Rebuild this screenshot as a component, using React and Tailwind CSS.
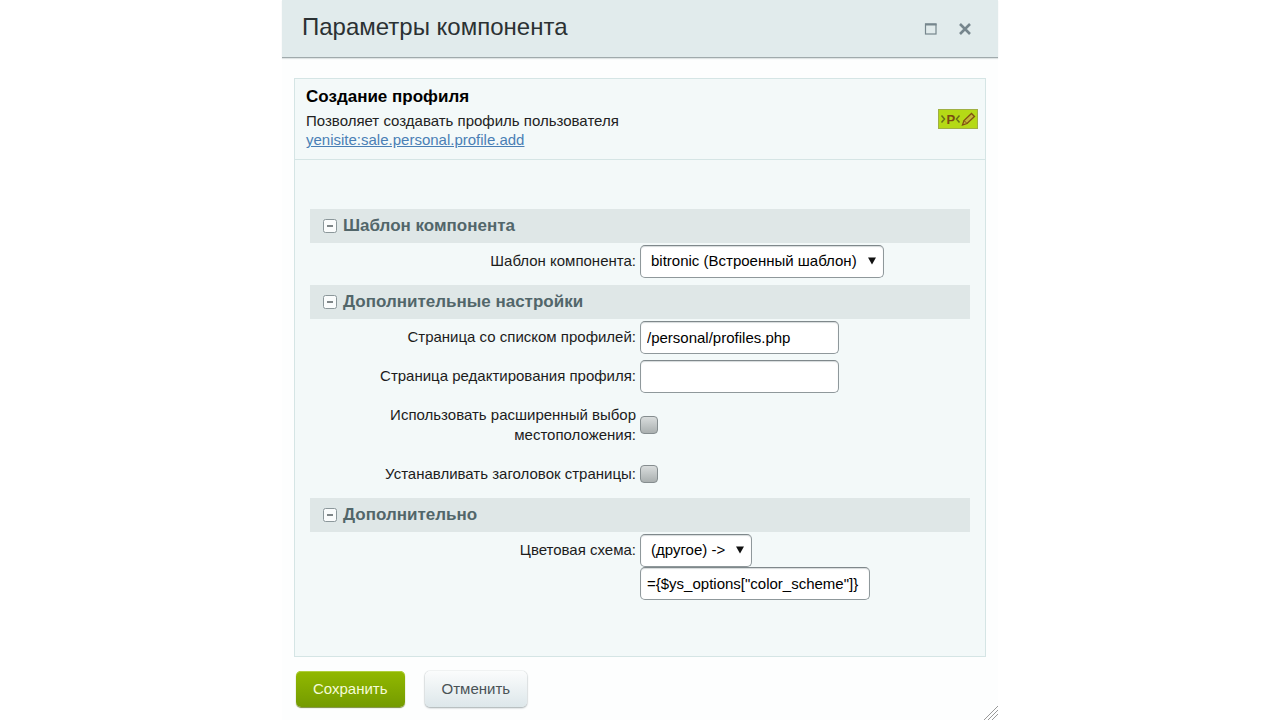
import { useState } from 'react';

const fieldStyle =
  'h-[33px] rounded-[5px] border border-[#8f989b] border-t-[#7f888b] bg-white text-[15px] text-black shadow-[inset_0_1px_1px_#d5dadb] outline-none';

function SelectField({ id, className, children }) {
  return (
    <div className={`relative ${className}`}>
      <select id={id} className={`${fieldStyle} w-full appearance-none pl-2.5 pr-6`}>
        {children}
      </select>
      <svg viewBox="0 0 8 8" className="pointer-events-none absolute right-2 top-3 h-2 w-2">
        <path d="M0 0.5h8L4 7.5z" fill="#111" />
      </svg>
    </div>
  );
}

function CheckField({ id }) {
  return (
    <input
      id={id}
      type="checkbox"
      className="block h-[18px] w-[18px] appearance-none rounded-[4px] border border-[#858d8f] bg-linear-to-b from-[#d9dddd] to-[#aab0b0] checked:to-[#7d8787]"
    />
  );
}

function Row({ id, label, className = 'pt-2 pb-0.5', children }) {
  return (
    <div className={`grid grid-cols-2 ${className}`}>
      <label htmlFor={id} className="pl-12 pr-1 text-right text-[15px] leading-5 text-[#1c1c1c]">
        {label}
      </label>
      {children}
    </div>
  );
}

function Section({ title, children }) {
  const [open, setOpen] = useState(true);

  return (
    <section>
      <h2 className="bg-[#dfe7e7]">
        <button
          type="button"
          aria-expanded={open}
          onClick={() => setOpen(!open)}
          className="flex h-[34px] w-full items-center gap-1.5 pl-[13px] text-left text-[17px] font-bold text-[#52666a]"
        >
          <svg viewBox="0 0 14 14" className="h-3.5 w-3.5" fill="none">
            <rect x="0.5" y="0.5" width="13" height="13" rx="2" fill="#fafcfc" stroke="#8b979a" />
            <path d={open ? 'M4 7h6' : 'M4 7h6M7 4v6'} stroke="#4a5457" strokeWidth="1.4" />
          </svg>
          {title}
        </button>
      </h2>
      {open && <div className="flex flex-col gap-0.5 pb-[5px]">{children}</div>}
    </section>
  );
}

export default function App() {
  return (
    <div className="min-h-screen bg-white font-['Liberation_Sans',Arial,sans-serif]">
      <div className="relative mx-auto flex min-h-screen max-w-[716px] flex-col bg-[#fdfefe]">
        <header className="flex h-[58px] items-center justify-between border-b border-[#a0aaac] bg-[#e1ebec] pb-1 pl-5 pr-[26px] shadow-[0_1px_1px_#dfe4e4]">
          <h1 className="text-2xl text-[#2b3133]">Параметры компонента</h1>
          <div className="flex items-center gap-5 pt-1">
            <button type="button" aria-label="Развернуть">
              <svg viewBox="0 0 14 14" className="h-3.5 w-3.5" fill="none" stroke="#76868d">
                <rect x="1.5" y="2" width="10.5" height="10" strokeWidth="1.2" />
                <path d="M1 2.5h11.5" strokeWidth="2" />
              </svg>
            </button>
            <button type="button" aria-label="Закрыть">
              <svg viewBox="0 0 14 14" className="h-3.5 w-3.5" fill="none" stroke="#76868d">
                <path d="M2 2l10 10M12 2L2 12" strokeWidth="2.6" />
              </svg>
            </button>
          </div>
        </header>

        <form onSubmit={(e) => e.preventDefault()} className="px-3 pt-5">
          <div className="border border-[#d5e5e5] bg-[#f3f9f9]">
            <div className="flex items-center justify-between border-b border-[#d5e5e5] pb-2.5 pl-[11px] pr-[7px] pt-1.5">
              <div>
                <p className="text-[17px] font-bold leading-6 text-black">Создание профиля</p>
                <p className="pt-0.5 text-[15px] leading-5 text-[#222]">Позволяет создавать профиль пользователя</p>
                <a href="#component" className="block text-[15px] leading-[18px] text-[#4a7fb5] underline">
                  yenisite:sale.personal.profile.add
                </a>
              </div>
              <svg viewBox="0 0 40 20" className="mt-1 h-5 w-10">
                <rect x="0.5" y="0.5" width="39" height="19" fill="#b5d916" stroke="#a0b044" />
                <path d="M3.500 6.500l3 3.500-3 3.500M21.500 6.500l-3 3.500 3 3.500" fill="none" stroke="#66701a" strokeWidth="1.5" />
                <text x="8.5" y="14.5" fontSize="13" fontWeight="bold" fill="#7b4a12">P</text>
                <path d="M24.500 16l1.500-4.500 7.500-7 3 3-7.500 7z" fill="#c3b63a" stroke="#80510f" strokeWidth="1.3" />
                <path d="M26 11.500l3 3" stroke="#80510f" />
              </svg>
            </div>

            <div className="px-[15px] pb-[49px] pt-[49px]">
              <Section title="Шаблон компонента">
                <Row id="template" label="Шаблон компонента:">
                  <SelectField id="template" className="-mt-1.5 w-[244px]">
                    <option>bitronic (Встроенный шаблон)</option>
                  </SelectField>
                </Row>
              </Section>

              <Section title="Дополнительные настройки">
                <Row id="listPage" label="Страница со списком профилей:">
                  <input id="listPage" type="text" defaultValue="/personal/profiles.php" className={`${fieldStyle} -mt-1.5 w-[199px] px-1.5`} />
                </Row>
                <Row id="editPage" label="Страница редактирования профиля:">
                  <input id="editPage" type="text" className={`${fieldStyle} -mt-1.5 w-[199px] px-1.5`} />
                </Row>
                <Row id="location" label="Использовать расширенный выбор местоположения:" className="h-14 items-center">
                  <CheckField id="location" />
                </Row>
                <Row id="setTitle" label="Устанавливать заголовок страницы:" className="h-[38px] items-center">
                  <CheckField id="setTitle" />
                </Row>
              </Section>

              <Section title="Дополнительно">
                <Row id="scheme" label="Цветовая схема:">
                  <div className="-mt-1.5">
                    <SelectField id="scheme" className="w-28">
                      <option>(другое) -&gt;</option>
                    </SelectField>
                    <input
                      type="text"
                      aria-label="Значение цветовой схемы"
                      defaultValue={'={$ys_options["color_scheme"]}'}
                      className={`${fieldStyle} block w-[230px] px-1.5`}
                    />
                  </div>
                </Row>
              </Section>
            </div>
          </div>

          <div className="flex gap-5 px-0.5 pt-3.5">
            <button
              type="submit"
              className="h-9 rounded-[5px] bg-linear-to-b from-[#92b900] to-[#749b00] px-[17px] text-[15px] text-[#f5fbd8] shadow-[0_1px_1px_#7b8c3a,inset_0_1px_0_#b0cf3c]"
            >
              Сохранить
            </button>
            <button
              type="button"
              className="h-9 rounded-[5px] bg-linear-to-b from-[#fbfcfc] to-[#dde7ea] px-[17px] text-[15px] text-[#4a5357] shadow-[0_0_1px_#a5adb0,0_1px_2px_#a5adb0]"
            >
              Отменить
            </button>
          </div>
        </form>

        <svg viewBox="0 0 14 14" className="absolute bottom-0 right-0 h-3.5 w-3.5 cursor-se-resize" stroke="#999">
          <path d="M0 14L14 0M4 14L14 4M8 14l6-6" />
        </svg>
      </div>
    </div>
  );
}
